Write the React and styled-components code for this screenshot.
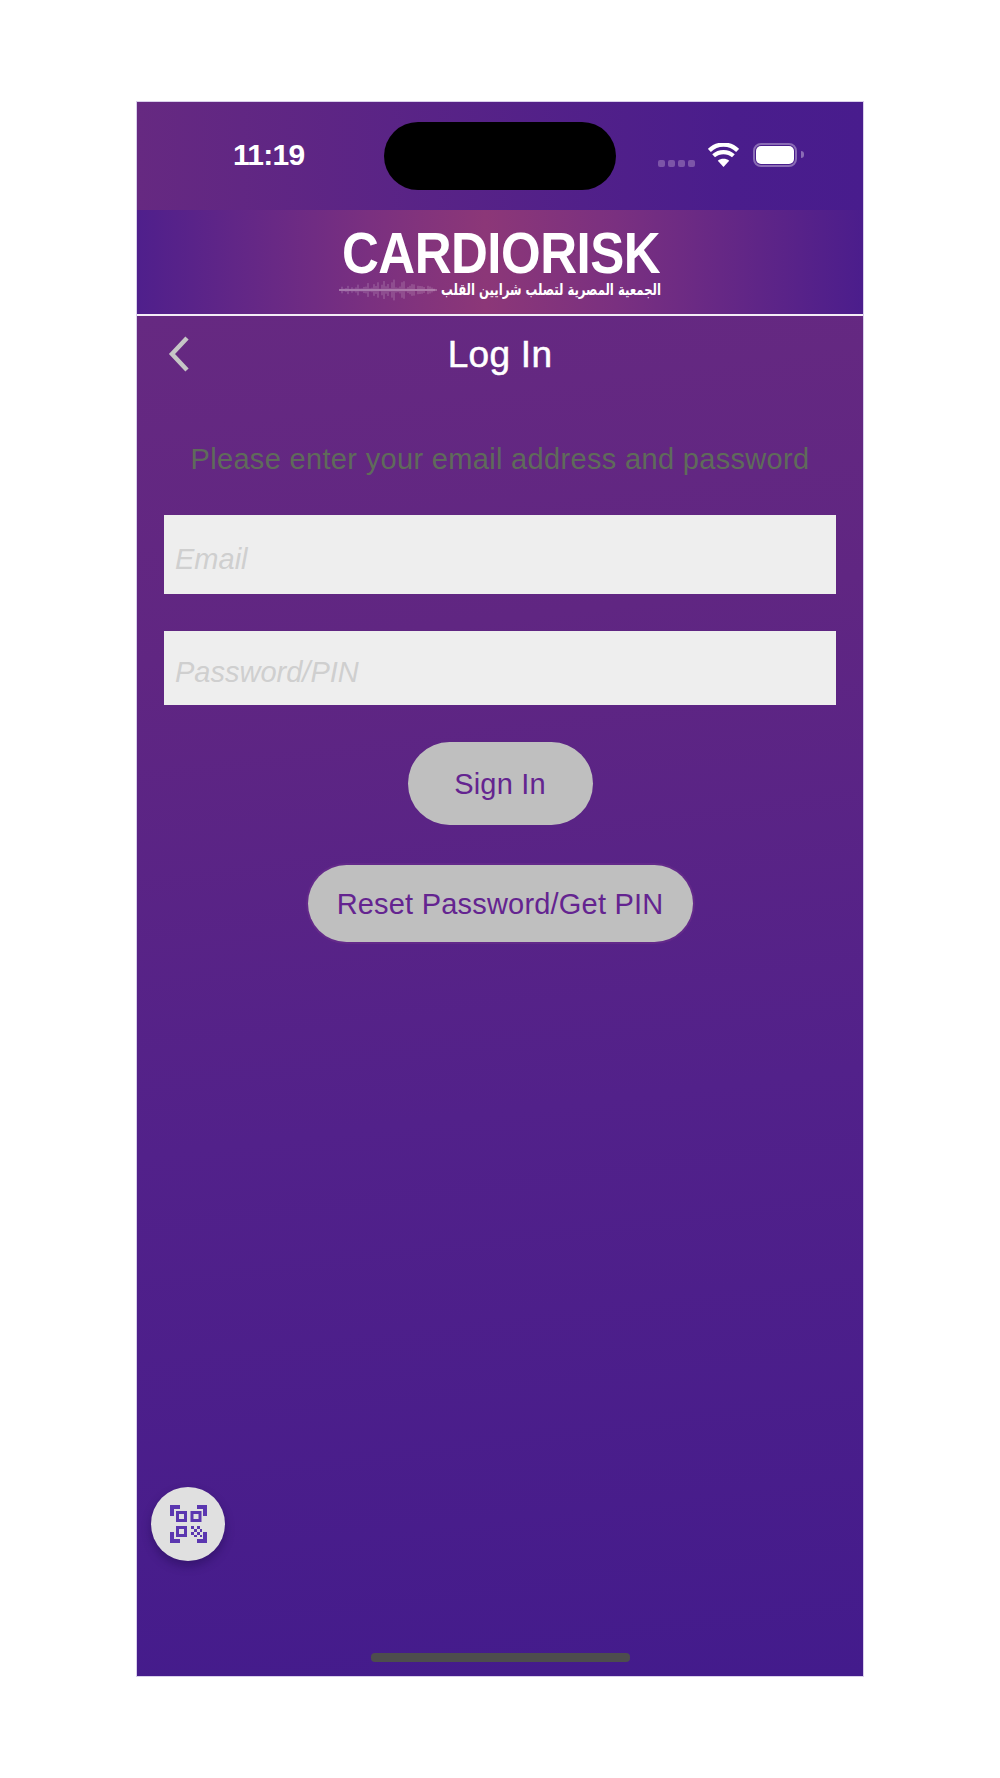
import React from 'react';
import styled, { createGlobalStyle } from 'styled-components';

const GlobalStyle = createGlobalStyle`
  html, body { margin: 0; padding: 0; background: #fff; }
  body { font-family: "Liberation Sans", Arial, sans-serif; }
  * { box-sizing: border-box; }
`;

const Page = styled.div`
  width: 1000px;
  height: 1778px;
  padding-top: 102px;
`;

const Phone = styled.div`
  position: relative;
  width: 726px;
  height: 1574px;
  margin: 0 auto;
  display: flex;
  flex-direction: column;
  overflow: hidden;
  box-shadow: 0 0 0 1px rgba(130, 95, 190, 0.3);
`;

const StatusBar = styled.div`
  height: 108px;
  flex: none;
  display: grid;
  grid-template-columns: 247px 232px 247px;
  padding-top: 20px;
  background: linear-gradient(90deg, #662981 0%, #4a1d8c 82%, #481c8d 100%);
`;

const Time = styled.div`
  padding: 15px 0 0 96px;
  color: #fff;
  font-size: 30px;
  font-weight: 700;
  line-height: 36px;
  letter-spacing: -0.7px;
`;

const Island = styled.div`
  height: 68px;
  background: #000;
  border-radius: 34px;
`;

const StatusIcons = styled.div`
  display: flex;
  align-items: flex-start;
  padding: 21px 0 0 42px;
`;

const SignalDots = styled.div`
  display: flex;
  gap: 3px;
  margin: 17px 13px 0 0;
`;

const SignalDot = styled.span`
  width: 7px;
  height: 7px;
  border-radius: 2px;
  background: #7c55a8;
`;

const Battery = styled.div`
  width: 44px;
  height: 24px;
  margin-left: 14px;
  padding: 1px;
  border: 2px solid #8a6cb5;
  border-radius: 8px;
  position: relative;
  &::after {
    content: '';
    position: absolute;
    left: 46px;
    top: 6px;
    width: 3px;
    height: 7px;
    border-radius: 0 3px 3px 0;
    background: #8a6cb5;
  }
`;

const BatteryFill = styled.div`
  height: 100%;
  background: #fff;
  border-radius: 5px;
`;

const Brand = styled.header`
  height: 106px;
  flex: none;
  display: flex;
  flex-direction: column;
  align-items: center;
  padding-top: 17px;
  padding-left: 3px;
  border-bottom: 2px solid #f4edf6;
  background: linear-gradient(90deg, #4f1f8c 0%, #7a3080 32%, #8c3778 48%, #7a3080 66%, #4b1d8c 100%);
`;

const LogoWord = styled.div`
  width: 319px;
  height: 52px;
  color: #fff;
  font-size: 58px;
  font-weight: 700;
  line-height: 52px;
  letter-spacing: -0.6px;
  white-space: nowrap;
  transform: scaleX(0.88);
  transform-origin: left center;
`;

const LogoLine = styled.div`
  width: 322px;
  height: 22px;
  margin-right: 3px;
  display: flex;
  align-items: center;
  justify-content: space-between;
`;

const LogoArabic = styled.div`
  width: 220px;
  color: #fff;
  font-family: "DejaVu Sans", "Noto Sans", sans-serif;
  font-size: 16px;
  font-weight: 700;
  line-height: 22px;
  white-space: nowrap;
  transform: scaleX(0.73);
  transform-origin: right center;
`;

const Body = styled.main`
  flex: 1;
  display: flex;
  flex-direction: column;
  align-items: center;
  padding: 0 27px;
  background: linear-gradient(173deg, #662981 0%, #602682 24%, #52218a 58%, #431b8c 100%);
`;

const NavBar = styled.div`
  position: relative;
  align-self: stretch;
  height: 72px;
  padding-top: 6px;
  display: flex;
  align-items: center;
  justify-content: center;
`;

const BackButton = styled.button`
  position: absolute;
  left: 0;
  top: 20px;
  width: 30px;
  height: 36px;
  padding: 0;
  border: 0;
  background: none;
`;

const Title = styled.h1`
  margin: 0;
  color: #fff;
  font-size: 37px;
  font-weight: 400;
  line-height: 44px;
  letter-spacing: 0.3px;
  -webkit-text-stroke: 0.5px #fff;
`;

const Hint = styled.p`
  margin: 51px 0 0;
  color: #5f6b5a;
  font-size: 29px;
  line-height: 40px;
  letter-spacing: 0.33px;
  white-space: nowrap;
`;

const Field = styled.input`
  display: block;
  width: 100%;
  height: ${(p) => p.$height}px;
  margin-top: ${(p) => p.$top}px;
  padding: ${(p) => p.$pad}px 0 0 11px;
  border: 0;
  border-radius: 0;
  outline: 0;
  background: #eeeeee;
  font-family: inherit;
  font-size: 29px;
  font-style: italic;
  &::placeholder {
    color: #cfcfcf;
    opacity: 1;
  }
`;

const PillButton = styled.button`
  display: block;
  width: ${(p) => p.$width}px;
  height: ${(p) => p.$height}px;
  margin-top: ${(p) => p.$top}px;
  padding: 2px 0 0;
  border: 0;
  border-radius: 42px;
  background: #bfbfbf;
  box-shadow: ${(p) => (p.$ring ? '0 0 0 2px #632a8a' : 'none')};
  color: #642490;
  font-family: inherit;
  font-size: 29px;
  letter-spacing: 0.2px;
`;

const QrFab = styled.button`
  position: absolute;
  left: 14px;
  bottom: 115px;
  width: 74px;
  height: 74px;
  padding: 0;
  display: flex;
  align-items: center;
  justify-content: center;
  border: 0;
  border-radius: 50%;
  background: #e0e0e0;
  box-shadow: 0 5px 10px rgba(20, 5, 60, 0.35);
`;

const HomeIndicator = styled.div`
  width: 259px;
  height: 9px;
  margin-top: auto;
  margin-bottom: 14px;
  border-radius: 4px;
  background: #4d4d4d;
`;

const WAVE = Array.from({ length: 48 }, (_, i) => {
  const center = Math.exp(-Math.pow((i - 26) / 13, 2));
  const jitter = Math.abs(Math.sin(i * 1.9) * Math.cos(i * 0.7));
  return 1 + jitter * (3 + 8 * center);
});

const Waveform = () => (
  <svg width="98" height="22" viewBox="0 0 98 22" aria-hidden="true">
    <line x1="0" y1="11" x2="98" y2="11" stroke="#fff" strokeOpacity="0.5" strokeWidth="1" />
    {WAVE.map((h, i) => (
      <line
        key={i}
        x1={i * 2 + 1}
        x2={i * 2 + 1}
        y1={11 - h}
        y2={11 + h}
        stroke="#fff"
        strokeOpacity="0.35"
        strokeWidth="0.8"
      />
    ))}
  </svg>
);

const WifiIcon = () => (
  <svg width="31" height="24" viewBox="0 0 31 24" aria-hidden="true">
    <path d="M15.5 24 L9.8 17.8 C13 15.2 18 15.2 21.2 17.8 Z" fill="#fff" />
    <path d="M5.6 12.8 C11.2 7.8 19.8 7.8 25.4 12.8" fill="none" stroke="#fff" strokeWidth="4.2" />
    <path d="M1.4 7.4 C9.4 -0.4 21.6 -0.4 29.6 7.4" fill="none" stroke="#fff" strokeWidth="4.2" />
  </svg>
);

const QrIcon = () => (
  <svg width="37" height="38" viewBox="0 0 37 38" aria-hidden="true">
    <g fill="#5b37b0">
      <path d="M0 0h10v4H4v7H0z" />
      <path d="M37 0H27v4h6v7h4z" />
      <path d="M0 38h10v-4H4v-7H0z" />
      <path d="M37 38H27v-4h6v-7h4z" />
      <path fillRule="evenodd" d="M6 6h11v11H6zM9 9v5h5V9z" />
      <path fillRule="evenodd" d="M20.5 6h11v11h-11zM23.5 9v5h5V9z" />
      <path fillRule="evenodd" d="M6 21h11v11H6zM9 24v5h5v-5z" />
      <path d="M21 21h3v3h-3zM27 21h3v3h-3zM24 24h3v3h-3zM21 27h3v3h-3zM27 27h3v3h-3zM30 24h2v3h-2zM24 30h3v2h-3zM30 30h2v2h-2z" />
    </g>
  </svg>
);

const App = () => (
  <Page>
    <GlobalStyle />
    <Phone>
      <StatusBar>
        <Time>11:19</Time>
        <Island />
        <StatusIcons>
          <SignalDots>
            <SignalDot />
            <SignalDot />
            <SignalDot />
            <SignalDot />
          </SignalDots>
          <WifiIcon />
          <Battery>
            <BatteryFill />
          </Battery>
        </StatusIcons>
      </StatusBar>
      <Brand>
        <LogoWord>CARDIORISK</LogoWord>
        <LogoLine>
          <Waveform />
          <LogoArabic dir="rtl">الجمعية المصرية لتصلب شرايين القلب</LogoArabic>
        </LogoLine>
      </Brand>
      <Body>
        <NavBar>
          <BackButton aria-label="Back">
            <svg width="24" height="36" viewBox="0 0 24 36">
              <path d="M20 2 L5 18 L20 34" fill="none" stroke="#c6c6c6" strokeWidth="4.5" />
            </svg>
          </BackButton>
          <Title>Log In</Title>
        </NavBar>
        <Hint>Please enter your email address and password</Hint>
        <Field placeholder="Email" $height={79} $top={36} $pad={10} />
        <Field placeholder="Password/PIN" $height={74} $top={37} $pad={8} />
        <PillButton $width={185} $height={83} $top={37}>Sign In</PillButton>
        <PillButton $width={385} $height={77} $top={40} $ring>Reset Password/Get PIN</PillButton>
        <HomeIndicator />
      </Body>
      <QrFab aria-label="Scan QR code">
        <QrIcon />
      </QrFab>
    </Phone>
  </Page>
);

export default App;
